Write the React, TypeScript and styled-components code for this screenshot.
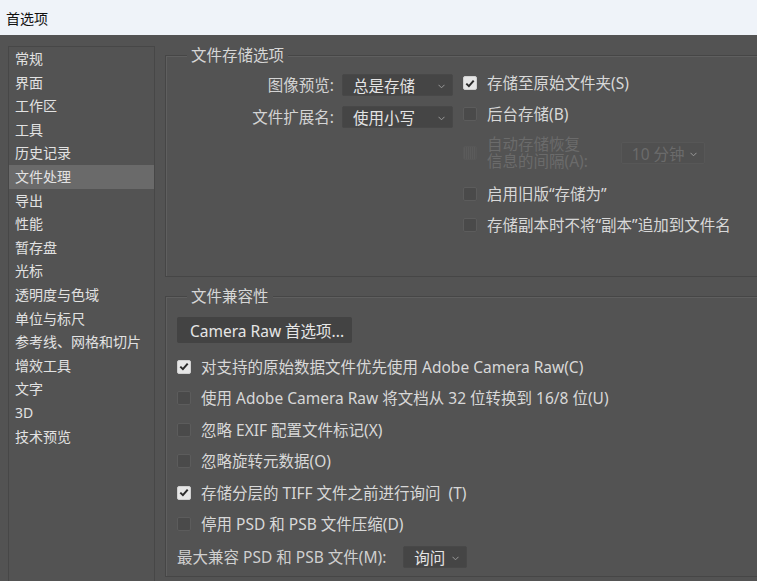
import React from "react";
import styled, { createGlobalStyle } from "styled-components";

const GlobalStyle = createGlobalStyle`
  html, body {
    margin: 0;
    padding: 0;
    background: #535353;
  }
  body {
    font-family: "Noto Sans", "Noto Sans CJK SC", sans-serif;
  }
`;

const navItems = [
    "常规",
    "界面",
    "工作区",
    "工具",
    "历史记录",
    "文件处理",
    "导出",
    "性能",
    "暂存盘",
    "光标",
    "透明度与色域",
    "单位与标尺",
    "参考线、网格和切片",
    "增效工具",
    "文字",
    "3D",
    "技术预览",
];

const compatOptions = [
    { label: "对支持的原始数据文件优先使用 Adobe Camera Raw(C)", checked: true },
    { label: "使用 Adobe Camera Raw 将文档从 32 位转换到 16/8 位(U)", checked: false },
    { label: "忽略 EXIF 配置文件标记(X)", checked: false },
    { label: "忽略旋转元数据(O)", checked: false },
    { label: "存储分层的 TIFF 文件之前进行询问\u00a0 (T)", checked: true },
    { label: "停用 PSD 和 PSB 文件压缩(D)", checked: false },
];

const Chevron: React.FC = () => (
    <ChevronIcon width="7" height="5" viewBox="0 0 7 5">
        <polyline points="0.5,0.8 3.5,3.8 6.5,0.8" fill="none" stroke="currentColor" strokeWidth="1" />
    </ChevronIcon>
);

const Check: React.FC<{ checked?: boolean; disabled?: boolean }> = ({ checked, disabled }) => (
    <Box $checked={checked} $disabled={disabled}>
        {checked && (
            <svg width="10" height="9" viewBox="0 0 10 9">
                <polyline points="1.3,4.6 3.9,7.1 8.7,1.6" fill="none" stroke="#2a2a2a" strokeWidth="2" />
            </svg>
        )}
    </Box>
);

const App: React.FC = () => {
    return (
        <Window>
            <GlobalStyle />
            <TitleBar>首选项</TitleBar>
            <Body>
                <Sidebar>
                    {navItems.map((item) => (
                        <NavItem key={item} $active={item === "文件处理"}>{item}</NavItem>
                    ))}
                </Sidebar>
                <Main>
                    <Group $height={222}>
                        <GroupTitle>文件存储选项</GroupTitle>
                        <StorageGrid>
                            <LeftCol>
                                <FieldRow>
                                    <FieldLabel>图像预览:</FieldLabel>
                                    <Select $width={111}>
                                        <span>总是存储</span>
                                        <Chevron />
                                    </Select>
                                </FieldRow>
                                <FieldRow>
                                    <FieldLabel>文件扩展名:</FieldLabel>
                                    <Select $width={111}>
                                        <span>使用小写</span>
                                        <Chevron />
                                    </Select>
                                </FieldRow>
                            </LeftCol>
                            <RightCol>
                                <CheckRow>
                                    <Check checked />
                                    <CheckLabel>存储至原始文件夹(S)</CheckLabel>
                                </CheckRow>
                                <CheckRow>
                                    <Check />
                                    <CheckLabel>后台存储(B)</CheckLabel>
                                </CheckRow>
                                <DelayRow>
                                    <Check disabled />
                                    <DelayLabel>
                                        自动存储恢复
                                        <br />
                                        信息的间隔(A):
                                    </DelayLabel>
                                    <Select $width={84} $disabled>
                                        <span>10 分钟</span>
                                        <Chevron />
                                    </Select>
                                </DelayRow>
                                <CheckRow>
                                    <Check />
                                    <CheckLabel>启用旧版“存储为”</CheckLabel>
                                </CheckRow>
                                <CheckRow>
                                    <Check />
                                    <CheckLabel>存储副本时不将“副本”追加到文件名</CheckLabel>
                                </CheckRow>
                            </RightCol>
                        </StorageGrid>
                    </Group>
                    <Group $height={281}>
                        <GroupTitle>文件兼容性</GroupTitle>
                        <CompatList>
                            <Button>Camera Raw 首选项...</Button>
                            {compatOptions.map((opt) => (
                                <CheckRow key={opt.label}>
                                    <Check checked={opt.checked} />
                                    <CheckLabel>{opt.label}</CheckLabel>
                                </CheckRow>
                            ))}
                            <FieldRow>
                                <MaxLabel>最大兼容 PSD 和 PSB 文件(M):</MaxLabel>
                                <Select $width={64}>
                                    <span>询问</span>
                                    <Chevron />
                                </Select>
                            </FieldRow>
                        </CompatList>
                    </Group>
                </Main>
            </Body>
        </Window>
    );
};

const Window = styled.div`
    width: 757px;
    height: 581px;
    overflow: hidden;
    background: #535353;
    display: flex;
    flex-direction: column;
`;

const TitleBar = styled.div`
    height: 35px;
    flex-shrink: 0;
    display: flex;
    align-items: center;
    padding-left: 6px;
    background: #eff3f9;
    color: #111;
    font-size: 14px;
`;

const Body = styled.div`
    display: flex;
    gap: 10px;
    padding: 11px 0 0 8px;
`;

const Sidebar = styled.div`
    width: 145px;
    height: 560px;
    flex-shrink: 0;
    border: 1px solid #474747;
`;

const NavItem = styled.div<{ $active?: boolean }>`
    height: 23.6px;
    line-height: 23.6px;
    padding-left: 6px;
    font-size: 14px;
    color: #e2e2e2;
    background: ${(p) => (p.$active ? "#6a6a6a" : "transparent")};
    white-space: nowrap;
`;

const Main = styled.div`
    flex: 1;
    display: flex;
    flex-direction: column;
    gap: 19px;
    margin-top: 9px;
    margin-right: -14px;
`;

const Group = styled.div<{ $height: number }>`
    height: ${(p) => p.$height}px;
    box-sizing: border-box;
    border: 1px solid #464646;
    box-shadow: inset 1px 1px 0 #5f5f5f;
`;

const GroupTitle = styled.div`
    display: table;
    margin: -10px 0 0 21px;
    padding: 0 4px;
    height: 18px;
    line-height: 18px;
    background: #535353;
    color: #d6d6d6;
    font-size: 15.5px;
`;

const StorageGrid = styled.div`
    display: grid;
    grid-template-columns: 287px 1fr;
    column-gap: 10px;
    padding-top: 10px;
`;

const LeftCol = styled.div`
    display: flex;
    flex-direction: column;
    gap: 10px;
`;

const FieldRow = styled.div`
    display: flex;
    align-items: center;
    justify-content: flex-end;
    gap: 8px;
`;

const FieldLabel = styled.span`
    color: #d4d4d4;
    font-size: 15.5px;
    line-height: 18px;
    white-space: nowrap;
`;

const MaxLabel = styled(FieldLabel)`
    margin-right: 9px;
    color: #cfcfcf;
`;

const Select = styled.div<{ $width: number; $disabled?: boolean }>`
    width: ${(p) => p.$width}px;
    height: 22px;
    box-sizing: border-box;
    display: flex;
    align-items: center;
    padding-left: 10px;
    border-radius: 2px;
    background: ${(p) => (p.$disabled ? "#505050" : "#454545")};
    border: 1px solid ${(p) => (p.$disabled ? "#575757" : "#484848")};
    color: ${(p) => (p.$disabled ? "#6b6b6b" : "#e4e4e4")};
    font-size: 15.5px;
    flex-shrink: 0;

    span {
        white-space: nowrap;
    }
`;

const ChevronIcon = styled.svg`
    margin-left: auto;
    margin-right: 7px;
    margin-top: 3px;
    color: #9a9a9a;
`;

const RightCol = styled.div`
    display: flex;
    flex-direction: column;
    gap: 13px;
`;

const CheckRow = styled.div`
    display: flex;
    align-items: center;
    gap: 10px;
    min-height: 18px;
`;

const DelayRow = styled(CheckRow)`
    margin: 0 0 2px;
`;

const Box = styled.span<{ $checked?: boolean; $disabled?: boolean }>`
    width: 14px;
    height: 14px;
    box-sizing: border-box;
    flex-shrink: 0;
    display: flex;
    align-items: center;
    justify-content: center;
    border-radius: 2px;
    background: ${(p) =>
        p.$checked
            ? "#e6e6e6"
            : p.$disabled
            ? "repeating-linear-gradient(90deg, #5b5b5b 0 1px, #555555 1px 2px)"
            : "#4a4a4a"};
    border: 1px solid ${(p) => (p.$checked ? "#d0d0d0" : p.$disabled ? "#575757" : "#5c5c5c")};
`;

const CheckLabel = styled.span`
    color: #d8d8d8;
    font-size: 15.5px;
    line-height: 18px;
    white-space: nowrap;
`;

const DelayLabel = styled.span`
    color: #6b6b6b;
    font-size: 15.5px;
    line-height: 17px;
    white-space: nowrap;
    margin-right: 23px;
`;

const CompatList = styled.div`
    display: flex;
    flex-direction: column;
    align-items: flex-start;
    gap: 13.4px;
    padding: 12px 0 0 11px;
`;

const Button = styled.div`
    width: 175px;
    height: 26px;
    box-sizing: border-box;
    display: flex;
    align-items: center;
    padding-left: 13px;
    margin-bottom: 1.6px;
    border-radius: 2px;
    background: #434343;
    color: #e6e6e6;
    font-size: 15.5px;
    white-space: nowrap;
`;

export default App;
